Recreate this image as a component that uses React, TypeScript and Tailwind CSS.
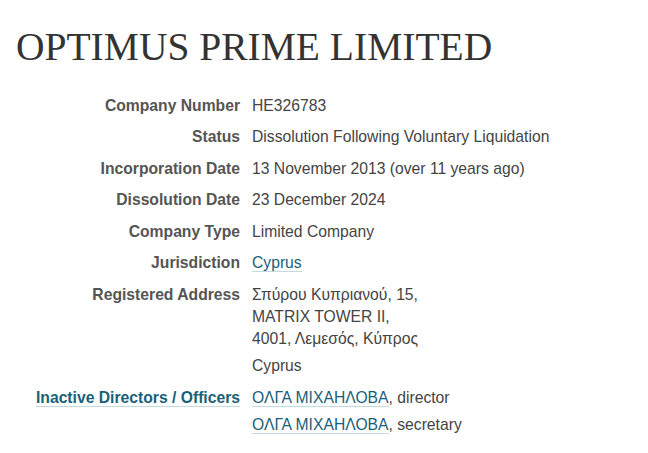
import React from 'react'

const rows: { label: string; value: React.ReactNode }[] = [
  { label: 'Company Number', value: 'HE326783' },
  { label: 'Status', value: 'Dissolution Following Voluntary Liquidation' },
  { label: 'Incorporation Date', value: '13 November 2013 (over 11 years ago)' },
  { label: 'Dissolution Date', value: '23 December 2024' },
  { label: 'Company Type', value: 'Limited Company' },
]

function Link({ children }: { children: React.ReactNode }) {
  return <a href="#" className="text-[#1a6079] border-b border-[#c3d9e1] no-underline">{children}</a>
}

export default function App() {
  return (
    <div className="bg-white min-h-[453px] px-4 pt-[28px] text-[#444]" style={{ fontFamily: '"Liberation Sans", Arial, sans-serif' }}>
      <h1 className="text-[39.5px] leading-none text-[#333] mb-[27px]" style={{ fontFamily: '"Liberation Serif", "Times New Roman", serif' }}>
        OPTIMUS PRIME LIMITED
      </h1>

      <dl className="grid grid-cols-[224px_1fr] gap-x-3 gap-y-[9.6px] text-[15.7px] leading-[22px]">
        {rows.map(r => (
          <React.Fragment key={r.label}>
            <dt className="text-right font-bold text-[#555]">{r.label}</dt>
            <dd>{r.value}</dd>
          </React.Fragment>
        ))}

        <dt className="text-right font-bold text-[#555]">Jurisdiction</dt>
        <dd><Link>Cyprus</Link></dd>

        <dt className="text-right font-bold text-[#555]">Registered Address</dt>
        <dd>
          <div>Σπύρου Κυπριανού, 15,</div>
          <div>MATRIX TOWER II,</div>
          <div>4001, Λεμεσός, Κύπρος</div>
          <div className="mt-[5px]">Cyprus</div>
        </dd>

        <dt className="text-right font-bold">
          <Link>Inactive Directors / Officers</Link>
        </dt>
        <dd>
          <div><Link>ΟΛΓΑ ΜΙΧΑΗΛΟΒΑ</Link>, director</div>
          <div className="mt-[5px]"><Link>ΟΛΓΑ ΜΙΧΑΗΛΟΒΑ</Link>, secretary</div>
        </dd>
      </dl>
    </div>
  )
}
